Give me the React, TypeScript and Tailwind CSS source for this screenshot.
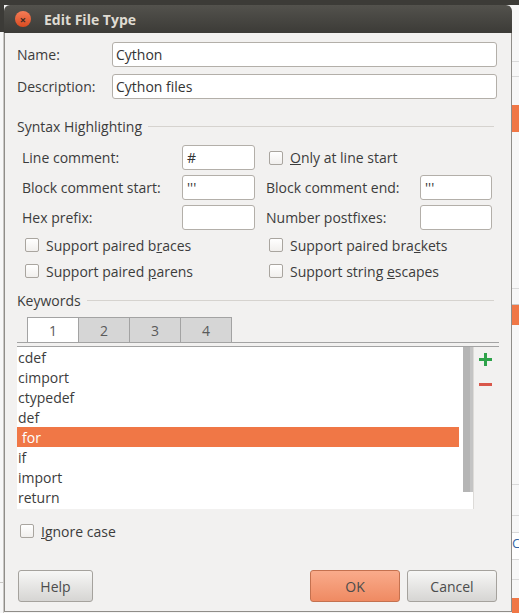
import { useState } from "react"

const KEYWORDS = ["cdef", "cimport", "ctypedef", "def", "for", "if", "import", "return"]

function Checkbox({ checked = false }: { checked?: boolean }) {
  return (
    <span className="inline-flex h-[14px] w-[14px] shrink-0 items-center justify-center rounded-[2px] border border-[#a9a59f] bg-gradient-to-b from-[#ffffff] to-[#f1efed]">
      {checked && <span className="text-[11px] leading-none">✓</span>}
    </span>
  )
}

function TextInput({ value = "", className = "" }: { value?: string; className?: string }) {
  return (
    <div
      className={`flex h-[25px] items-center rounded-[3px] border border-[#b3afa9] bg-white text-[14px] text-[#333333] ${className}`}
    >
      {value}
    </div>
  )
}

function SectionHeader({ title }: { title: string }) {
  return (
    <div className="mr-[3px] flex h-[20px] items-center gap-[6px]">
      <span className="text-[14px] text-[#3c3c3c]">{title}</span>
      <span className="h-px flex-1 bg-[#d6d3cf]" />
    </div>
  )
}

function Button({ label, primary = false, className = "" }: { label: string; primary?: boolean; className?: string }) {
  return (
    <button
      className={cn(
        "flex h-[32px] items-center justify-center rounded-[3px] border text-[14px] text-[#4c4c4c]",
        primary
          ? "border-[#c4714f] bg-gradient-to-b from-[#f9ab8b] to-[#ef8a62]"
          : "border-[#a5a29d] bg-gradient-to-b from-[#f7f7f6] to-[#d6d5d3]",
        className
      )}
    >
      {label}
    </button>
  )
}

function cn(...parts: (string | false | undefined)[]) {
  return parts.filter(Boolean).join(" ")
}

export default function App() {
  const [activeTab] = useState(0)
  const selected = 4

  return (
    <div className="flex h-[613px] w-[519px] overflow-hidden bg-[#f5f5f5] font-['Open_Sans',sans-serif]">
      {/* window behind, left edge */}
      <div className="flex w-[4px] flex-col">
        <div className="h-[32px] bg-[#3c3b37]" />
        <div className="h-[550px] border-r border-[#c9c7c4] bg-[#f7f7f7]" />
        <div className="flex-1 border-t border-r border-[#c9c7c4] bg-[#f7f7f7]" />
      </div>

      {/* dialog */}
      <div className="flex w-[508px] flex-col">
        <div className="h-[5px] bg-[#3c3b37]" />
        <div className="flex h-[28px] items-center rounded-t-[6px] bg-gradient-to-b from-[#53524d] to-[#3c3b37] pl-[11px]">
          <span className="flex h-[16px] w-[16px] items-center justify-center rounded-full bg-gradient-to-b from-[#f47c56] to-[#d94a1e] text-[11px] leading-none font-bold text-[#3b2a22]">
            ×
          </span>
          <span className="ml-[13px] text-[14px] font-bold text-[#dfdbd2]">Edit File Type</span>
        </div>

        <div className="flex h-[579px] flex-col border-x border-b border-[#8f8d89] bg-[#f2f1f0] pl-[12px] pr-[14px]">
          <div className="mt-[9px] flex items-center">
            <span className="w-[95px] text-[14px] text-[#3c3c3c]">Name:</span>
            <TextInput value="Cython" className="flex-1 pl-[3px]" />
          </div>
          <div className="mt-[7px] flex items-center">
            <span className="w-[95px] text-[14px] text-[#3c3c3c]">Description:</span>
            <TextInput value="Cython files" className="flex-1 pl-[3px]" />
          </div>

          <div className="mt-[17px]">
            <SectionHeader title="Syntax Highlighting" />
          </div>

          <div className="mt-[9px] flex flex-col gap-[5px] pl-[5px] text-[14px] text-[#3c3c3c]">
            <div className="flex items-center">
              <span className="w-[160px]">Line comment:</span>
              <TextInput value="#" className="w-[73px] pl-[4px]" />
              <span className="ml-[14px] flex items-center gap-[7px] pl-[0px]">
                <Checkbox />
                <span>
                  <span className="underline">O</span>nly at line start
                </span>
              </span>
            </div>
            <div className="flex items-center">
              <span className="w-[160px]">Block comment start:</span>
              <TextInput value="'''" className="w-[73px] pl-[4px]" />
              <span className="ml-[11px] w-[154px]">Block comment end:</span>
              <TextInput value="'''" className="w-[72px] pl-[4px]" />
            </div>
            <div className="flex items-center">
              <span className="w-[160px]">Hex prefix:</span>
              <TextInput className="w-[73px]" />
              <span className="ml-[11px] w-[154px]">Number postfixes:</span>
              <TextInput className="w-[72px]" />
            </div>
          </div>

          <div className="mt-[2px] flex flex-col pl-[8px] text-[14px] text-[#3c3c3c]">
            <div className="flex h-[26px] items-center">
              <span className="flex w-[244px] items-center gap-[7px]">
                <Checkbox />
                <span>
                  Support paired b<span className="underline">r</span>aces
                </span>
              </span>
              <span className="flex items-center gap-[7px]">
                <Checkbox />
                <span>
                  Support paired bra<span className="underline">c</span>kets
                </span>
              </span>
            </div>
            <div className="flex h-[26px] items-center">
              <span className="flex w-[244px] items-center gap-[7px]">
                <Checkbox />
                <span>
                  Support paired <span className="underline">p</span>arens
                </span>
              </span>
              <span className="flex items-center gap-[7px]">
                <Checkbox />
                <span>
                  Support string <span className="underline">e</span>scapes
                </span>
              </span>
            </div>
          </div>

          <div className="mt-[6px]">
            <SectionHeader title="Keywords" />
          </div>

          {/* tabs */}
          <div className="mt-[7px] flex h-[26px] w-[482px] items-end border-b border-[#a3a3a3] pl-[10px]">
            {["1", "2", "3", "4"].map((t, i) => (
              <div
                key={t}
                className={cn(
                  "-mr-px flex h-[25px] w-[52px] items-center justify-center border border-b-0 border-[#a3a3a3] text-[14px] text-[#5a5a5a]",
                  i === activeTab ? "bg-white" : "bg-[#d6d6d6]"
                )}
              >
                {t}
              </div>
            ))}
          </div>

          <div className="mt-[3px] flex w-[482px] border-t border-[#a3a3a3]">
            <div className="flex h-[162px] w-[456px] bg-white">
              <div className="flex flex-1 flex-col pr-[4px] text-[14px] text-[#3c3c3c]">
                {KEYWORDS.map((k, i) => (
                  <div
                    key={k}
                    className={cn(
                      "flex h-[20px] items-center",
                      i === selected ? "bg-[#f07746] pl-[5px] text-white" : "pl-[1px]"
                    )}
                  >
                    {k}
                  </div>
                ))}
              </div>
              <div className="flex w-[10px] flex-col">
                <div className="h-[145px] border-r-[3px] border-[#c4c4c4] bg-[#b5b5b5]" />
              </div>
            </div>
            <div className="flex flex-1 flex-col items-center border-l border-[#dddbd8] pt-[6px] pr-[2px]">
              <svg width="13" height="13" viewBox="0 0 13 13">
                <rect x="5" y="0" width="3" height="13" fill="#2ea24a" />
                <rect x="0" y="5" width="13" height="3" fill="#2ea24a" />
              </svg>
              <svg width="13" height="3" viewBox="0 0 13 3" className="mt-[17px]">
                <rect x="0" y="0" width="13" height="3" fill="#d9574a" />
              </svg>
            </div>
          </div>

          <div className="mt-[12px] flex h-[20px] items-center gap-[7px] pl-[3px] text-[14px] text-[#3c3c3c]">
            <Checkbox />
            <span>
              <span className="underline">I</span>gnore case
            </span>
          </div>

          <div className="mt-[29px] flex items-center">
            <Button label="Help" className="ml-[1px] w-[75px]" />
            <div className="flex-1" />
            <Button label="OK" primary className="w-[90px]" />
            <Button label="Cancel" className="ml-[7px] w-[90px]" />
          </div>
        </div>
      </div>

      {/* window behind, right edge */}
      <div className="flex w-[7px] flex-col bg-[#f7f7f7]">
        <div className="h-[5px] bg-[#3c3b37]" />
        <div className="mt-[56px] h-[16px] border-y border-[#d9d9d9]" />
        <div className="mt-[28px] h-[27px] bg-[#f07746]" />
        <div className="mt-[156px] h-[16px] border-t border-[#d9d9d9]" />
        <div className="h-[21px] border-t border-[#c9c9c9] bg-[#f07746]" />
        <div className="mt-[159px] h-[31px] border-t border-[#d9d9d9]" />
        <div className="h-[17px] border-t border-[#d9d9d9]" />
        <div className="h-[27px] border-t border-[#d9d9d9] bg-white text-[13px] leading-[20px] text-[#3465a4]">C</div>
        <div className="h-[20px] border-t border-[#d9d9d9]" />
        <div className="h-[19px] border-t border-[#d9d9d9]" />
        <div className="flex-1 bg-[#f07746]" />
      </div>
    </div>
  )
}
